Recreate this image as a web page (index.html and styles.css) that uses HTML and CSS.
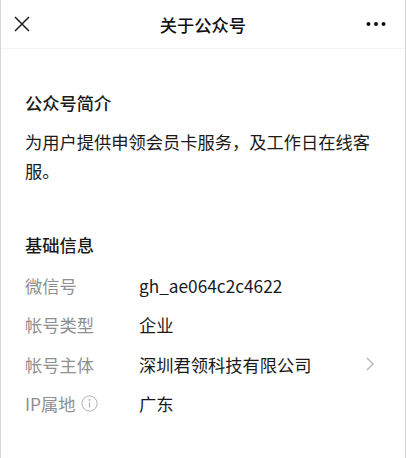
FILE: index.html
```html
<!DOCTYPE html>
<html>
  <head>
    <meta charset="utf-8">
    <link rel="stylesheet" href="styles.css">
  </head>
  <body>
    <div class="page">
      <header class="topbar">
        <svg class="icon-close" width="16" height="16" viewBox="0 0 16 16">
          <path d="M1 1 L15 15 M15 1 L1 15" stroke="#1f1f1f" stroke-width="1.5" fill="none"/>
        </svg>
        <h1 class="title">关于公众号</h1>
        <svg class="icon-more" width="20" height="6" viewBox="0 0 20 6">
          <circle cx="2.5" cy="3" r="2" fill="#111"/>
          <circle cx="10" cy="3" r="2" fill="#111"/>
          <circle cx="17.5" cy="3" r="2" fill="#111"/>
        </svg>
      </header>

      <section class="intro">
        <h2 class="sec-title">公众号简介</h2>
        <p class="desc">为用户提供申领会员卡服务，及工作日在线客服。</p>
      </section>

      <section class="info">
        <h2 class="sec-title">基础信息</h2>
        <div class="row">
          <span class="label">微信号</span>
          <span class="value">gh_ae064c2c4622</span>
        </div>
        <div class="row">
          <span class="label">帐号类型</span>
          <span class="value">企业</span>
        </div>
        <div class="row">
          <span class="label">帐号主体</span>
          <span class="value">深圳君领科技有限公司</span>
          <svg class="chevron" width="8" height="14" viewBox="0 0 8 14">
            <path d="M1 1 L7 7 L1 13" stroke="#b3b3b3" stroke-width="1.3" fill="none"/>
          </svg>
        </div>
        <div class="row">
          <span class="label">IP属地
            <svg class="info-icon" width="17" height="17" viewBox="0 0 17 17">
              <circle cx="8.5" cy="8.5" r="7.6" stroke="#b0b0b0" stroke-width="1" fill="none"/>
              <circle cx="8.5" cy="5" r="0.9" fill="#b0b0b0"/>
              <path d="M8.5 7.2 V12.6" stroke="#b0b0b0" stroke-width="1.1"/>
            </svg>
          </span>
          <span class="value">广东</span>
        </div>
      </section>
    </div>
  </body>
</html>
```

FILE: styles.css
```css
body {
  margin: 0;
  font-family: "Noto Sans CJK SC", "Noto Sans", sans-serif;
  background: #fff;
}

.page {
  height: 458px;
  border-left: 1px solid #d6d6d6;
  border-right: 1px solid #d6d6d6;
  box-sizing: border-box;
}

.topbar {
  height: 48px;
  border-bottom: 1px solid #f3f3f3;
  display: flex;
  align-items: center;
  justify-content: space-between;
  padding: 0 19px 0 13px;
  position: relative;
}

.icon-close {
  display: block;
}

.title {
  margin: 0;
  font-size: 17.25px;
  font-weight: 500;
  color: #111;
  position: absolute;
  left: 0;
  right: 0;
  text-align: center;
  pointer-events: none;
}

.icon-more {
  display: block;
}

.intro {
  padding: 42px 24px 0 24px;
}

.sec-title {
  margin: 0;
  font-size: 17.25px;
  font-weight: 500;
  line-height: 24px;
  color: #1a1a1a;
}

.desc {
  margin: 12px 0 0 0;
  font-size: 17.25px;
  line-height: 29px;
  color: #1a1a1a;
}

.info {
  padding: 48px 24px 0 24px;
}

.info .sec-title {
  margin-bottom: 9px;
}

.row {
  display: flex;
  align-items: center;
  height: 39.3px;
  font-size: 17.25px;
}

.label {
  width: 114px;
  flex: none;
  color: #8f8f8f;
  display: flex;
  align-items: center;
}

.value {
  color: #1a1a1a;
  flex: 1;
}

.chevron {
  display: block;
  margin-right: 7px;
}

.info-icon {
  display: block;
  margin-left: 6px;
}
```
